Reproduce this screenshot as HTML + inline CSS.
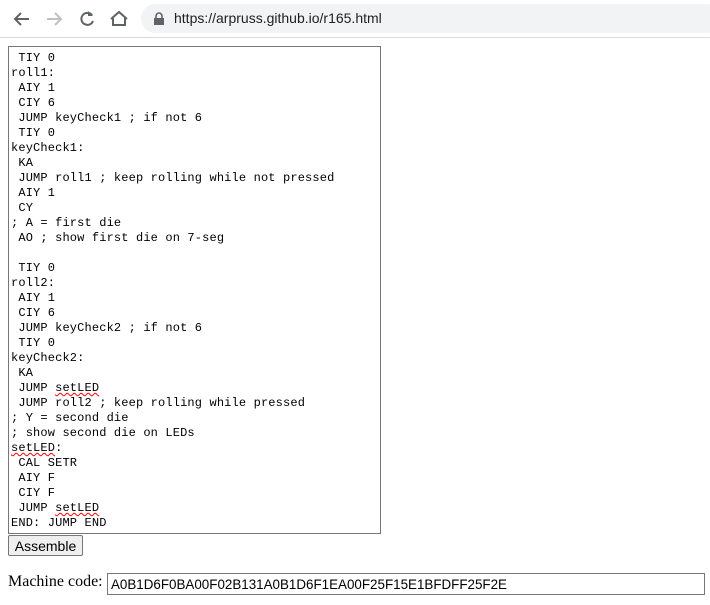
<!DOCTYPE html>
<html><head><style>
body{margin:0;width:710px;height:605px;background:#fff;overflow:hidden;font-family:"Liberation Serif",serif;}
.bar{position:absolute;left:0;top:0;width:710px;height:37px;background:#fff;border-bottom:1px solid #dadce0;}
.url{position:absolute;left:141px;top:4px;width:580px;height:29px;border-radius:15px;background:#f1f3f4;}
.url span{position:absolute;left:33px;top:6px;font:14px "Liberation Sans",sans-serif;color:#202124;}
pre{position:absolute;left:8px;top:46px;width:373px;height:488px;border:1px solid #767676;margin:0;padding:4px 0 0 2px;box-sizing:border-box;font:12px/15px "Liberation Mono",monospace;letter-spacing:0.15px;color:#000;}
.sq{text-decoration:underline wavy red;text-decoration-thickness:1px;}
button{position:absolute;left:8px;top:535px;width:75px;height:21px;font:14px "Liberation Sans",sans-serif;background:#efefef;border:1px solid #767676;border-radius:2px;padding:0;}
.lab{position:absolute;left:8px;top:573px;font-size:16px;}
.inp{position:absolute;left:107px;top:573px;width:598px;height:22px;border:1px solid #767676;box-sizing:border-box;font:13.4px "Liberation Sans",sans-serif;padding:3px 0 0 3px;}
</style></head><body>
<div class="bar">
<svg width="140" height="37" style="position:absolute;left:0;top:0">
<g fill="none" stroke-width="2">
<path d="M29 19H15M21 13l-6 6 6 6" stroke="#5f6368"/>
<path d="M47 19h14M55 13l6 6-6 6" stroke="#bdc1c6"/>
<path d="M92 15a6 6 0 1 0 1 6" stroke="#5f6368"/>
<path d="M111 19l8-7 8 7M113 18v7h12v-7" stroke="#5f6368"/>
</g>
<path d="M88 11v5h5z" fill="#5f6368"/>
</svg>
<div class="url"><svg width="14" height="14" style="position:absolute;left:11px;top:8px"><rect x="2" y="6" width="10" height="7" fill="#5f6368"/><path d="M4 6V4a3 3 0 0 1 6 0v2" fill="none" stroke="#5f6368" stroke-width="1.6"/></svg><span>https://arpruss.github.io/r165.html</span></div>
</div>
<pre> TIY 0
roll1:
 AIY 1
 CIY 6
 JUMP keyCheck1 ; if not 6
 TIY 0
keyCheck1:
 KA
 JUMP roll1 ; keep rolling while not pressed
 AIY 1
 CY
; A = first die
 AO ; show first die on 7-seg

 TIY 0
roll2:
 AIY 1
 CIY 6
 JUMP keyCheck2 ; if not 6
 TIY 0
keyCheck2:
 KA
 JUMP <span class="sq">setLED</span>
 JUMP roll2 ; keep rolling while pressed
; Y = second die
; show second die on LEDs
<span class="sq">setLED</span>:
 CAL SETR
 AIY F
 CIY F
 JUMP <span class="sq">setLED</span>
END: JUMP END</pre>
<button>Assemble</button>
<div class="lab">Machine code:</div>
<div class="inp">A0B1D6F0BA00F02B131A0B1D6F1EA00F25F15E1BFDFF25F2E</div>
</body></html>
